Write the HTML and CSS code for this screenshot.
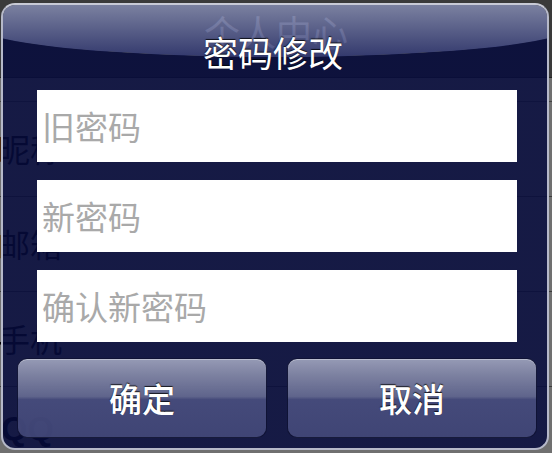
FILE: index.html
```html
<!DOCTYPE html>
<html lang="zh-CN">
<head>
<meta charset="utf-8">
<title>密码修改</title>
<link rel="stylesheet" href="styles.css">
</head>
<body>
<div class="page">
  <header class="nav"><span class="nav-title">个人中心</span></header>
  <ul class="rows">
    <li class="row">昵称</li>
    <li class="row">邮箱</li>
    <li class="row">手机</li>
    <li class="row row-latin">QQ</li>
  </ul>
</div>
<div class="alert">
  <h1 class="alert-title">密码修改</h1>
  <div class="fields">
    <input class="field" type="password" placeholder="旧密码">
    <input class="field" type="password" placeholder="新密码">
    <input class="field" type="password" placeholder="确认新密码">
  </div>
  <div class="actions">
    <button class="btn">确定</button>
    <button class="btn">取消</button>
  </div>
</div>
</body>
</html>
```
FILE: styles.css
```css
* { box-sizing: border-box; }
html, body {
  margin: 0;
  padding: 0;
}
body {
  width: 552px;
  height: 453px;
  overflow: hidden;
  position: relative;
  background: #707070;
  font-family: "Noto Sans CJK SC", "Noto Sans", sans-serif;
}

/* underlying page */
.page {
  width: 552px;
  height: 453px;
  overflow: hidden;
}
.nav {
  height: 78px;
  background: #3a3a3a;
  border-bottom: 1px solid #222;
  display: flex;
  justify-content: center;
}
.nav-title {
  font-size: 36px;
  line-height: 62px;
  color: #c4c4c4;
}
.rows {
  list-style: none;
  margin: 23px 0 0;
  padding: 0;
  border-top: 1px solid #444;
}
.row {
  height: 95px;
  border-bottom: 1px solid #3c3c3c;
  font-size: 32px;
  line-height: 92px;
  color: #000;
  margin-left: -2px;
}
.row-latin {
  font-family: "Liberation Sans", sans-serif;
  font-weight: bold;
  font-size: 34px;
  line-height: 83px;
  margin-left: 1px;
}

/* alert dialog */
.alert {
  position: absolute;
  left: 1px;
  top: 3px;
  width: 548px;
  height: 447px;
  border: 2px solid #b6b9c9;
  border-top-color: #c8cad6;
  border-radius: 14px;
  overflow: hidden;
  display: flex;
  flex-direction: column;
  background: radial-gradient(300px 32px at 50% 0, rgba(6, 11, 61, 0) 99%, rgba(6, 11, 61, 0.85) 100%) 0 20px / 100% 100% no-repeat;
}
.alert::before {
  content: "";
  position: absolute;
  left: -28px;
  top: 0;
  width: 600px;
  height: 52px;
  border-radius: 0 0 300px 300px / 0 0 32px 32px;
  background: linear-gradient(rgba(134, 141, 178, 0.85), rgba(50, 57, 118, 0.85));
}
.alert-title {
  position: relative;
  margin: 22px 0 13px;
  height: 50px;
  font-size: 35px;
  line-height: 50px;
  font-weight: normal;
  text-align: center;
  color: #fff;
  text-shadow: 0 -1px 1px rgba(0, 0, 0, 0.8);
  padding-right: 4px;
}
.fields {
  position: relative;
  display: flex;
  flex-direction: column;
  gap: 18px;
  margin: 0 30px 0 34px;
}
.field {
  display: block;
  width: 100%;
  height: 72px;
  border: none;
  outline: none;
  margin: 0;
  padding: 0 0 0 5px;
  background: #fff;
  font-family: "Noto Sans CJK SC", "Noto Sans", sans-serif;
  font-size: 33px;
  color: #333;
}
.field::placeholder {
  color: #a9a9a9;
}
.actions {
  position: relative;
  display: flex;
  gap: 20px;
  margin: 16px 10px 0 14px;
}
.btn {
  flex: 1;
  height: 80px;
  border: 1px solid rgba(10, 13, 45, 0.9);
  border-radius: 10px;
  background: linear-gradient(rgba(168, 172, 197, 0.88) 0%, rgba(140, 144, 174, 0.88) 20%, rgba(106, 111, 150, 0.88) 48%, rgba(76, 81, 130, 0.88) 52%, rgba(70, 75, 124, 0.88) 100%);
  box-shadow: inset 0 1px 0 rgba(255, 255, 255, 0.35);
  color: #fff;
  font-family: "Noto Sans CJK SC", "Noto Sans", sans-serif;
  font-size: 33px;
  font-weight: 500;
  line-height: 1;
  padding: 0;
  text-shadow: 0 -1px 1px rgba(0, 0, 0, 0.8);
}
```
